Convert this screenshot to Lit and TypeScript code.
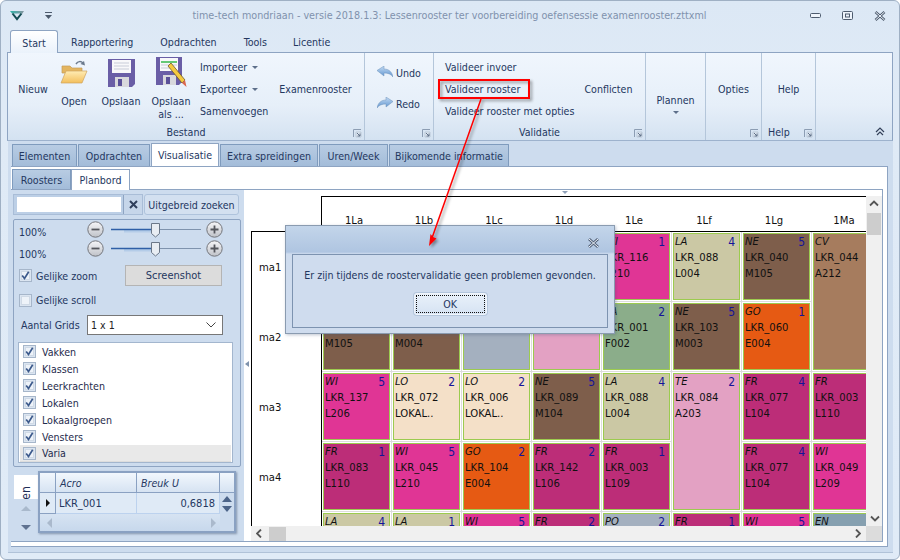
import { LitElement, html, css, svg } from "lit";
import { customElement } from "lit/decorators.js";

type Cell = { s?: string; n?: string; l?: string; r?: string; c: string; tall?: boolean };

const rows: { label: string; cells: Cell[] }[] = [
  { label: "ma1", cells: [
    { c: "brown" }, { c: "brown" }, { c: "grey" }, { c: "lpink" },
    { s: "WI", n: "1", l: "LKR_116", r: "L210", c: "mag" },
    { s: "LA", n: "4", l: "LKR_088", r: "L004", c: "khaki" },
    { s: "NE", n: "5", l: "LKR_040", r: "M105", c: "brown" },
    { s: "CV", l: "LKR_044", r: "A212", c: "tan", tall: true },
  ]},
  { label: "ma2", cells: [
    { r: "M105", c: "brown" }, { r: "M004", c: "brown" }, { c: "grey" }, { c: "lpink" },
    { s: "LA", n: "2", l: "LKR_001", r: "F002", c: "green" },
    { s: "NE", n: "5", l: "LKR_103", r: "M003", c: "brown" },
    { s: "GO", n: "1", l: "LKR_060", r: "E004", c: "orange" },
  ]},
  { label: "ma3", cells: [
    { s: "WI", n: "5", l: "LKR_137", r: "L206", c: "mag" },
    { s: "LO", n: "2", l: "LKR_072", r: "LOKAL..", c: "beige" },
    { s: "LO", n: "2", l: "LKR_006", r: "LOKAL..", c: "beige" },
    { s: "NE", n: "5", l: "LKR_089", r: "M104", c: "brown" },
    { s: "LA", n: "4", l: "LKR_088", r: "L004", c: "khaki" },
    { s: "TE", n: "2", l: "LKR_084", r: "A203", c: "lpink", tall: true },
    { s: "FR", n: "4", l: "LKR_077", r: "L104", c: "plum" },
    { s: "FR", l: "LKR_003", r: "L110", c: "plum" },
  ]},
  { label: "ma4", cells: [
    { s: "FR", n: "1", l: "LKR_083", r: "L110", c: "plum" },
    { s: "WI", n: "5", l: "LKR_045", r: "L210", c: "mag" },
    { s: "GO", n: "2", l: "LKR_104", r: "E004", c: "orange" },
    { s: "FR", n: "2", l: "LKR_142", r: "L106", c: "plum" },
    { s: "FR", n: "1", l: "LKR_003", r: "L109", c: "plum" },
    { s: "FR", n: "4", l: "LKR_077", r: "L104", c: "plum" },
    { s: "WI", l: "LKR_049", r: "L209", c: "mag" },
  ]},
  { label: "", cells: [
    { s: "LA", n: "4", c: "khaki" }, { s: "LA", n: "1", c: "khaki" },
    { s: "WI", n: "5", c: "mag" }, { s: "FR", n: "2", c: "plum" },
    { s: "PO", n: "2", c: "grey" }, { s: "FR", n: "1", c: "plum" },
    { s: "WI", n: "5", c: "mag" }, { s: "EN", c: "steel" },
  ]},
];
const cols = ["1La", "1Lb", "1Lc", "1Ld", "1Le", "1Lf", "1Lg", "1Ma"];
const checks = ["Vakken", "Klassen", "Leerkrachten", "Lokalen", "Lokaalgroepen", "Vensters", "Varia"];

const launcher = html`<svg class="launch" width="9" height="9" viewBox="0 0 9 9"><path d="M.5 8V.5H8" fill="none" stroke="#8c9db3"/><path d="M3 3h5v5H3z" fill="#dfe8f2" stroke="#a9b7c8" stroke-width=".6"/><path d="M4 4l3 3M7 4.500V7H4.500" fill="none" stroke="#5f7088"/></svg>`;
const check = (on: boolean) => html`<svg class="chk" width="13" height="13" viewBox="0 0 13 13"><rect x=".5" y=".5" width="12" height="12" fill="#dbe5f1" stroke="#a6b6ca"/><rect x="2.500" y="2.500" width="8" height="8" fill="#eef3f9" stroke="#d0dae6"/>${on ? svg`<path d="M3.200 6.400l2.300 3 4.200-6.600" fill="none" stroke="#3c5a8c" stroke-width="1.700"/>` : ""}</svg>`;
const roundBtn = (plus: boolean) => html`<svg width="17" height="17" viewBox="0 0 17 17"><circle cx="8.500" cy="8.500" r="7.700" fill="url(#rb)" stroke="#74767c"/><path d="${plus ? "M4.500 8.500h8M8.500 4.500v8" : "M4.500 8.500h8"}" stroke="#54565c" stroke-width="1.800"/></svg>`;
const slider = html`<div class="sl">${roundBtn(false)}<svg width="102" height="17" viewBox="0 0 102 17"><path d="M7 8.500h90" stroke="#7f93ad"/><path d="M20 10h31" stroke="#b4cce8" stroke-width="3"/><path d="M7 8.500h44" stroke="#2f5fa6" stroke-width="1.400"/><path d="M47.500 2.500h8v10l-4 3.500-4-3.500z" fill="#e8edf3" stroke="#6a7788"/></svg>${roundBtn(true)}</div>`;

@customElement("app-root")
export class AppRoot extends LitElement {
  static styles = css`
    :host { display:block; position:relative; width:900px; height:560px; overflow:hidden; background:#fff;
      font-family:"DejaVu Sans Condensed","DejaVu Sans",sans-serif; font-stretch:condensed; font-size:10.600px; color:#24375f; }
    .win { box-sizing:border-box; width:900px; height:560px; display:flex; flex-direction:column;
      border:1px solid #9fb0c4; border-radius:6px; background:linear-gradient(#dce8f5 0,#dfeaf6 100px,#e0ebf7); }
    .title { height:29px; flex:none; display:flex; align-items:center; position:relative; padding-left:9px; }
    .logo { flex:none; }
    .qat { flex:none; margin-left:21px; }
    .ttl { flex:1; text-align:center; color:#8092ad; font-size:10.700px; padding-left:37px; white-space:nowrap; }
    .ctl { flex:none; display:flex; align-items:center; gap:20px; margin-right:13px; }
    .rtabs { height:22px; flex:none; display:flex; padding-left:9px; position:relative; z-index:2; }
    .rtab { display:flex; align-items:center; height:22px; box-sizing:border-box; padding-top:1px; }
    .rtab.on { width:48px; justify-content:center; border:1px solid #8ea4c2; border-bottom:none; border-radius:3px 3px 0 0;
      background:linear-gradient(#fff,#eaf2fb); height:23px; }
    .t1 { margin-left:13px; } .t2 { margin-left:27px; } .t3 { margin-left:27px; } .t4 { margin-left:26px; }
    .ribbon { height:89px; flex:none; margin:0 6px; display:flex; box-sizing:border-box; border:1px solid #8ea4c2; border-bottom:1px solid #9db2cd;
      background:linear-gradient(#f0f6fd,#e6eff9 60%,#d4e2f1); position:relative; }
    .grp { position:relative; flex:none; box-sizing:border-box; border-right:1px solid #b4c6da; height:87px; }
    .g1 { width:357px; } .g2 { width:69px; } .g3 { width:212px; } .g4 { width:60px; } .g5 { width:56px; } .g6 { width:54px; }
    .launch { position:absolute; right:2px; bottom:2px; }
    .glab { position:absolute; bottom:1px; left:0; right:0; text-align:center; line-height:14px; }
    .g6 .glab { text-align:left; padding-left:6px; }
    .gb { display:grid; height:66px; padding-top:3px; box-sizing:content-box; align-items:center; }
    .g1 .gb { grid-template-columns:30px 28px 42px 34px 67px 73px; column-gap:12px; padding-left:10px; }
    .g3 .gb { grid-template-columns:auto 1fr; padding-left:10px; column-gap:10px; }
    .big { display:flex; flex-direction:column; align-items:center; align-self:start; padding-top:2px; text-align:center; line-height:13px; white-space:nowrap; }
    .ib { height:36px; padding-top:1px; display:flex; align-items:flex-start; justify-content:center; }
    .ib.hi { margin-top:-2px; height:38px; }
    .stack { display:grid; grid-template-rows:repeat(3,22px); align-items:center; white-space:nowrap; margin-top:-1px; }
    .g3 .stack { padding-left:1px; }
    .stack .dd::after { content:""; display:inline-block; margin-left:5px; vertical-align:2px; border:3px solid transparent; border-top:3px solid #5d6f8a; border-bottom:none; }
    .ur { display:grid; grid-template-rows:31px 31px; align-items:center; padding:4px 0 0 12px; }
    .ur div { display:flex; align-items:center; gap:3px; }
    .ctr { display:flex; align-items:center; justify-content:center; height:66px; padding-top:3px; white-space:nowrap; }
    .gb .ctr { padding-top:0; margin-top:-1px; }
    .g3 .ctr { justify-content:flex-start; }
    .ctr.pl { flex-direction:column; justify-content:flex-start; padding-top:41px; height:26px; gap:5px; }
    .pl i { display:block; border:3.500px solid transparent; border-top:3.500px solid #5d6f8a; border-bottom:none; }
    .chev { position:absolute; right:7px; bottom:4px; }

    .doc { flex:1; margin:0 6px 6px 7px; box-sizing:border-box; background:#cddcee; padding:3px 5px 5px 3px; display:flex; flex-direction:column; min-height:0;
      border-bottom:1px solid #b0c2d8; }
    .dtabs { display:flex; height:22px; flex:none; padding-left:1px; gap:1px; }
    .dtab { box-sizing:border-box; display:flex; align-items:center; justify-content:center; height:22px; border:1px solid #7f9bbd; border-bottom:none;
      background:linear-gradient(#b8cce3,#a3bcd9); border-radius:1px 1px 0 0; }
    .dtab.on { background:#fff; height:23px; margin-top:-1px; border-color:#8ea4c2; position:relative; z-index:1; }
    .w1 { width:65px; } .w2 { width:72px; } .w3 { width:68px; } .w4 { width:98px; } .w5 { width:69px; } .w6 { width:120px; }
    .page { flex:1; min-height:0; background:#fff; border-right:1px solid #8ea4c2; border-top:1px solid #8ea4c2; padding:2px 4px 4px 0; display:flex; flex-direction:column; border-bottom:1px solid #8ea4c2; }
    .stabs { display:flex; height:20px; flex:none; padding-left:1px; position:relative; }
    .stab { box-sizing:border-box; width:59px; display:flex; align-items:center; justify-content:center; height:20px; }
    .stab.off { background:linear-gradient(#b8cce3,#a3bcd9); border:1px solid #7f9bbd; border-bottom:none; }
    .stab.on { height:21px; border:1px solid #8ea4c2; border-bottom:none; background:#fff; position:relative; z-index:1; }
    .sub { flex:1; min-height:0; display:flex; border:1px solid #8ea4c2; border-left:none; }
    .left { width:233px; flex:none; box-sizing:border-box; background:#cddcee; padding:4px 4px 0 2px; display:flex; flex-direction:column; }
    .split { width:7px; flex:none; background:#fff; display:flex; align-items:center; padding-left:1px; box-sizing:border-box; }
    .split i { border:3px solid transparent; border-right:4px solid #7f93ad; border-left:none; margin-top:-4px; }
    .srch { display:flex; height:21px; flex:none; }
    .sbox { box-sizing:border-box; width:130px; display:flex; align-items:stretch; border:1px solid #a9bdd7; background:#bccfe6; padding:0; }
    .sinp { flex:1; background:#fff; margin:2px 2px 2px 3px; }
    .sx { width:18px; border-left:1px solid #8ea4c2; background:#c6d6ea; display:flex; align-items:center; justify-content:center; }
    .btn { box-sizing:border-box; width:95px; margin-left:1px; display:flex; align-items:center; justify-content:center; border:1px solid #afc3dc; border-radius:3px; background:#d3e0f0; white-space:nowrap; }
    .gbx { flex:none; margin-top:4px; width:228px; height:248px; box-sizing:border-box; border:1px solid #8ea4c2; border-radius:2px; padding:0 3px 0 4px; }
    .zoom { display:grid; grid-template-columns:72px 1fr; height:38px; }
    .zl { display:flex; flex-direction:column; gap:8px; padding:5px 0 0 1px; line-height:14px; }
    .sl { display:flex; align-items:center; height:19px; gap:0; margin-left:-3px; }
    .sl svg { flex:none; }
    .row2 { display:grid; grid-template-columns:106px 97px; height:21px; margin-top:7px; align-items:center; padding-left:1px; }
    .cb { display:flex; align-items:center; gap:4px; }
    .shot { height:21px; box-sizing:border-box; background:#dcdcdc; border:1px solid #b4b4b4; display:flex; align-items:center; justify-content:center; font-size:11px; }
    .row3 { height:14px; margin-top:7px; padding-left:1px; }
    .row4 { display:flex; height:20px; margin-top:8px; align-items:center; padding-left:3px; }
    .row4 span { width:66px; flex:none; }
    .sel { width:136px; height:20px; box-sizing:border-box; background:#fff; border:1px solid #777; display:flex; align-items:center; justify-content:space-between; padding:0 6px 0 3px; color:#222; font-size:10.600px; }
    .list { height:121px; width:215px; margin-top:7px; box-sizing:border-box; background:#fff; border:1px solid #a3b6ce; padding-top:0; }
    .li { display:flex; align-items:center; height:17px; box-sizing:border-box; padding-left:4px; gap:6px; color:#1f2b4d; }
    .li.sel2 { background:#e9e9e9; margin:0 1px; padding-left:3px; border-bottom:1px solid #ddd; }
    .bot { display:flex; height:63px; margin-top:4px; flex:none; padding-left:1px; }
    .vt { width:24px; flex:none; display:flex; flex-direction:column; align-items:center; padding-top:4px; box-sizing:border-box; }
    .vtab { width:24px; height:24px; background:#fff; display:flex; align-items:center; justify-content:center; overflow:hidden; }
    .vtab span { transform:translateY(6px) rotate(-90deg); color:#1e2d55; font-size:12px; }
    .vt .up { margin-top:7px; border:5px solid transparent; border-bottom:5px solid #a9b9cc; border-top:none; }
    .vt .dn { margin-top:14px; border:5px solid transparent; border-top:5px solid #5f7290; border-bottom:none; }
    .dg { width:198px; box-sizing:border-box; height:62px; border:2px solid #8aa1c2; background:#cddcee; box-shadow:1px 1px 2px rgba(60,80,110,.5); display:grid;
      grid-template-columns:16px 81px 83px 1fr; grid-template-rows:20px 21px 1fr; }
    .dh { background:linear-gradient(#f2f7fd,#d6e3f2); border-right:1px solid #8aa1c2; border-bottom:1px solid #8aa1c2; display:flex; align-items:center; padding-left:4px; font-style:italic; }
    .dh.e { padding:0; border-right:none; }
    .dc { background:#dfeaf6; border-right:1px solid #bcd2ee; border-bottom:1px solid #bcd2ee; display:flex; align-items:center; padding:0 2px 0 3px; color:#24375f; font-size:11px; }
    .dc.ind { border-right:1px solid #8aa1c2; border-bottom:1px solid #8aa1c2; padding:0 0 0 6px; background:#dfeaf6; }
    .dc.ind i { border:4px solid transparent; border-left:4px solid #111; border-right:none; }
    .dc.num { justify-content:flex-end; padding-right:4px; }
    .vs { display:flex; flex-direction:column; align-items:center; justify-content:center; gap:4px; background:#cddcee; }
    .vs .u { border:5px solid transparent; border-bottom:6px solid #4b6388; border-top:none; }
    .vs .d { border:5px solid transparent; border-top:6px solid #4b6388; border-bottom:none; }
    .hs { grid-column:1 / 4; display:flex; align-items:center; justify-content:space-between; padding:0 4px 0 7px; background:linear-gradient(#d6e3f2,#c7d8ec); }
    .hs .l { border:5px solid transparent; border-right:5px solid #aab9cc; border-left:none; }
    .hs .r { border:5px solid transparent; border-left:5px solid #aab9cc; border-right:none; }

    .canvas { flex:1; min-width:0; background:#fff; display:grid; grid-template-columns:1fr 16px; grid-template-rows:1fr 15px; padding-top:6px; position:relative; }
    .tri { position:absolute; left:311px; top:1px; border:3px solid transparent; border-top:3px solid #8ea0b8; border-bottom:none; }
    .view { overflow:hidden; min-width:0; min-height:0; }
    .sheet { display:grid; grid-template-columns:71px repeat(8,70px); grid-template-rows:36px repeat(5,70px); width:631px;
      font-size:11.200px; color:#111; }
    .corner { border-bottom:1px solid #000; border-right:1px solid #000; }
    .ch { border-top:1px solid #000; border-bottom:1px solid #000; display:flex; align-items:flex-end; justify-content:center; padding:0 6px 3px 0; box-sizing:border-box; line-height:14px; }
    .rh { border-left:1px solid #000; border-right:1px solid #000; display:flex; align-items:center; padding-left:7px; }
    .slot { box-sizing:border-box; padding:1px; border-right:1px solid #ddd; border-bottom:1px solid #ddd; display:flex; min-width:0; }
    .slot.tall { grid-row:span 2; }
    .cell { flex:1; box-sizing:border-box; border:1px solid #9ccb4f; padding:0 4px 0 1px; line-height:16px; color:#111; overflow:hidden; min-width:0; }
    .l1 { display:flex; justify-content:space-between; height:16px; }
    .l1 em { font-style:italic; }
    .l1 b { font-weight:normal; color:#13139a; font-size:12px; }
    .ln { height:16px; white-space:nowrap; }
    .mag { background:#e03595; } .plum { background:#bc2d78; } .brown { background:#7e5e4b; } .khaki { background:#cbc8a4; }
    .orange { background:#e65a13; } .green { background:#8bad8a; } .beige { background:#f4e0c8; } .lpink { background:#e3a1c3; }
    .grey { background:#a4b0bf; } .tan { background:#a67c5e; } .steel { background:#86a0b0; }
    .vsb { background:#f0f0f0; display:flex; flex-direction:column; align-items:center; padding:4px 1px 0; box-sizing:border-box; position:relative; }
    .vsb .th { align-self:stretch; height:22px; background:#cdcdcd; margin-top:6px; }
    .vsb .dwn { position:absolute; bottom:4px; left:4px; }
    .hsb { background:#f0f0f0; display:flex; align-items:center; padding-left:5px; position:relative; }
    .hsb .th { width:17px; height:14px; background:#cdcdcd; margin-left:7px; }
    .hsb .rt { position:absolute; right:5px; top:3px; }
    .cr { background:#dcdcdc; }

    .dlg { position:absolute; left:285px; top:225px; width:330px; height:109px; box-sizing:border-box; border:1px solid #8a9bb0; z-index:5;
      background:linear-gradient(#c3d5ea,#afc5e1 26px,#cfdcee 28px); box-shadow:1px 1px 3px rgba(70,90,120,.35); display:flex; flex-direction:column; padding:28px 6px 5px 6px; }
    .dx { position:absolute; right:14px; top:12px; }
    .dbody { flex:1; border:1px solid #7d93b0; background:#cfdcee; display:flex; flex-direction:column; align-items:center; }
    .dmsg { font-size:10.600px; margin-top:12px; line-height:16px; white-space:nowrap; }
    .ok { width:73px; height:22px; margin-top:10px; box-sizing:border-box; border:1px solid #f0f5fb; border-radius:3px; background:linear-gradient(#e9f1fa,#d6e3f3); box-shadow:0 0 0 1px #b4c6dc; padding:1px; }
    .ok div { height:100%; border:1px dotted #111; box-sizing:border-box; display:flex; align-items:center; justify-content:center; }
    .anno { position:absolute; left:0; top:0; z-index:6; pointer-events:none; }
    .defs { position:absolute; }
  `;

  private cellT(c: Cell) {
    return html`<div class="slot ${c.tall ? "tall" : ""}"><div class="cell ${c.c}">
      <div class="l1"><em>${c.s ?? ""}</em><b>${c.n ?? ""}</b></div>
      <div class="ln">${c.l ?? ""}</div><div class="ln">${c.r ?? ""}</div>
    </div></div>`;
  }

  render() {
    return html`
    <svg class="defs" width="0" height="0"><defs>
      <linearGradient id="rb" x1="0" y1="0" x2="0" y2="1"><stop offset="0" stop-color="#f6f6f8"/><stop offset="1" stop-color="#bfc2c8"/></linearGradient>
      <linearGradient id="fo" x1="0" y1="0" x2="0" y2="1"><stop offset="0" stop-color="#ffecb4"/><stop offset="1" stop-color="#f3bf5c"/></linearGradient>
      <linearGradient id="ar" x1="0" y1="0" x2="0" y2="1"><stop offset="0" stop-color="#c4dcf4"/><stop offset="1" stop-color="#5e93cf"/></linearGradient>
      <linearGradient id="lg" x1="0" y1="0" x2="1" y2="0"><stop offset="0" stop-color="#2fb3a8"/><stop offset="1" stop-color="#8a97a2"/></linearGradient>
    </defs></svg>
    <div class="win">
      <div class="title">
        <svg class="logo" width="14" height="10" viewBox="0 0 14 10"><path d="M0 0h14L12.500 2.500H2z" fill="url(#lg)"/><path d="M2.500 2.500L7 8.200l4.500-5.700" fill="none" stroke="#124b52" stroke-width="2"/></svg>
        <svg class="qat" width="7" height="7" viewBox="0 0 7 7"><path d="M0 .5h7" stroke="#4c5a6c"/><path d="M0 3h7L3.500 7z" fill="#4c5a6c"/></svg>
        <div class="ttl">time-tech mondriaan - versie 2018.1.3: Lessenrooster ter voorbereiding oefensessie examenrooster.zttxml</div>
        <div class="ctl">
          <svg width="12" height="6" viewBox="0 0 12 6"><rect x=".5" y=".5" width="10" height="4" rx="1" fill="#eef4fb" stroke="#4d5b6e"/></svg>
          <svg width="12" height="10" viewBox="0 0 12 10"><rect x=".5" y=".5" width="10" height="8" rx="1" fill="#eef4fb" stroke="#4d5b6e"/><rect x="3.500" y="3" width="4" height="3" fill="none" stroke="#4d5b6e"/></svg>
          <svg width="12" height="10" viewBox="0 0 12 10"><path d="M1.500 1l9 8M10.500 1l-9 8" stroke="#4d5b6e" stroke-width="2.600"/><path d="M1.500 1l9 8M10.500 1l-9 8" stroke="#eef4fb" stroke-width="1"/></svg>
        </div>
      </div>
      <div class="rtabs">
        <div class="rtab on">Start</div>
        <div class="rtab t1">Rapportering</div><div class="rtab t2">Opdrachten</div><div class="rtab t3">Tools</div><div class="rtab t4">Licentie</div>
      </div>
      <div class="ribbon">
        <div class="grp g1"><div class="gb">
          <div class="ctr">Nieuw</div>
          <div class="big"><div class="ib"><svg width="28" height="26" viewBox="0 0 28 26">
            <path d="M16 5c2-3 5-3 7-1" fill="none" stroke="#6b7a8c" stroke-width="1.500"/><path d="M25 6.500l-1-4.500-3.500 3z" fill="#6b7a8c"/>
            <path d="M2 7h8l2 2h10v5H2z" fill="#e3b560" stroke="#c49b58" stroke-width=".7"/>
            <path d="M6 12h21l-5 12H1z" fill="url(#fo)" stroke="#cfa45e" stroke-width=".7"/></svg></div>Open</div>
          <div class="big"><div class="ib"><svg width="27" height="28" viewBox="0 0 27 28">
            <path d="M0 0h27v25l-3 3H0z" fill="#6a5ea6"/><rect x="4" y="1" width="19" height="13" fill="#f8f8fa"/>
            <path d="M6 4h15M6 7h15M6 10h15" stroke="#c8ccd8"/><rect x="7" y="18" width="14" height="10" fill="#d8d8dc"/><rect x="10" y="20" width="4" height="7" fill="#5a5098"/></svg></div>Opslaan</div>
          <div class="big"><div class="ib hi"><svg width="31" height="32" viewBox="0 0 31 32">
            <path d="M0 0h26v25l-3 3H0z" fill="#6a5ea6"/><rect x="4" y="1" width="18" height="13" fill="#f8f8fa"/>
            <path d="M5 5h16" stroke="#35b84a" stroke-width="1.500"/><path d="M5 8h16M5 11h10" stroke="#c8ccd8"/><rect x="7" y="18" width="13" height="10" fill="#d8d8dc"/><rect x="10" y="20" width="4" height="7" fill="#5a5098"/>
            <path d="M12 9l3-3 14 17-3 3z" fill="#f5c93f" stroke="#6d5a2a" stroke-width=".8"/><path d="M26 26l3-3 1.500 7z" fill="#d9674f"/></svg></div>Opslaan<br>als ...</div>
          <div class="stack"><div class="dd">Importeer</div><div class="dd">Exporteer</div><div>Samenvoegen</div></div>
          <div class="ctr">Examenrooster</div>
        </div><div class="glab">Bestand</div>${launcher}</div>
        <div class="grp g2"><div class="ur">
          <div><svg width="16" height="13" viewBox="0 0 16 13"><path d="M0 4.500L7 0v3c5 0 8 3 9 8-2-3-5-4-9-4v3z" fill="url(#ar)" stroke="#6f92ba" stroke-width=".5"/></svg>Undo</div>
          <div><svg width="16" height="13" viewBox="0 0 16 13"><path d="M16 4.500L9 0v3C4 3 1 6 0 11c2-3 5-4 9-4v3z" fill="url(#ar)" stroke="#6f92ba" stroke-width=".5"/></svg>Redo</div>
        </div>${launcher}</div>
        <div class="grp g3"><div class="gb">
          <div class="stack"><div>Valideer invoer</div><div>Valideer rooster</div><div>Valideer rooster met opties</div></div>
          <div class="ctr">Conflicten</div>
        </div><div class="glab">Validatie</div>${launcher}</div>
        <div class="grp g4"><div class="ctr pl">Plannen<i></i></div></div>
        <div class="grp g5"><div class="ctr">Opties</div>${launcher}</div>
        <div class="grp g6"><div class="ctr">Help</div><div class="glab">Help</div>${launcher}</div>
        <svg class="chev" width="10" height="9" viewBox="0 0 10 9"><path d="M1 5l4-4 4 4M2 8l3-3 3 3" fill="none" stroke="#33415a" stroke-width="1.200"/></svg>
      </div>
      <div class="doc">
        <div class="dtabs">
          <div class="dtab w1">Elementen</div><div class="dtab w2">Opdrachten</div>
          <div class="dtab on w3">Visualisatie</div><div class="dtab w4">Extra spreidingen</div>
          <div class="dtab w5">Uren/Week</div><div class="dtab w6">Bijkomende informatie</div>
        </div>
        <div class="page">
          <div class="stabs"><div class="stab off">Roosters</div><div class="stab on">Planbord</div></div>
          <div class="sub">
            <div class="left">
              <div class="srch">
                <div class="sbox"><div class="sinp"></div><div class="sx"><svg width="9" height="9" viewBox="0 0 9 9"><path d="M1 1l7 7M8 1L1 8" stroke="#2f3f5c" stroke-width="2"/></svg></div></div>
                <div class="btn">Uitgebreid zoeken</div>
              </div>
              <div class="gbx">
                <div class="zoom"><div class="zl"><div>100%</div><div>100%</div></div><div>${slider}${slider}</div></div>
                <div class="row2"><div class="cb">${check(true)}Gelijke zoom</div><div class="shot">Screenshot</div></div>
                <div class="row3 cb">${check(false)}Gelijke scroll</div>
                <div class="row4"><span>Aantal Grids</span><div class="sel">1 x 1<svg width="10" height="6" viewBox="0 0 10 6"><path d="M.5.500L5 5 9.500.5" fill="none" stroke="#444"/></svg></div></div>
                <div class="list">${checks.map((c) => html`<div class="li ${c === "Varia" ? "sel2" : ""}">${check(true)}${c}</div>`)}</div>
              </div>
              <div class="bot">
                <div class="vt"><div class="vtab"><span>en</span></div><i class="up"></i><i class="dn"></i></div>
                <div class="dg">
                  <div class="dh"></div><div class="dh">Acro</div><div class="dh">Breuk U</div><div class="dh e"></div>
                  <div class="dc ind"><i></i></div><div class="dc">LKR_001</div><div class="dc num">0,6818</div>
                  <div class="vs"><i class="u"></i><i class="d"></i></div>
                  <div class="hs"><i class="l"></i><i class="r"></i></div><div></div>
                </div>
              </div>
            </div>
            <div class="split"><i></i></div>
            <div class="canvas">
              <i class="tri"></i>
              <div class="view"><div class="sheet">
                <div class="corner"></div>
                ${cols.map((c) => html`<div class="ch">${c}</div>`)}
                ${rows.map((r) => html`<div class="rh">${r.label}</div>${r.cells.map((c) => this.cellT(c))}`)}
              </div></div>
              <div class="vsb">
                <svg width="10" height="7" viewBox="0 0 10 7"><path d="M1 5.500l4-4 4 4" fill="none" stroke="#555" stroke-width="1.800"/></svg>
                <div class="th"></div>
                <svg class="dwn" width="10" height="7" viewBox="0 0 10 7"><path d="M1 1.500l4 4 4-4" fill="none" stroke="#555" stroke-width="1.800"/></svg>
              </div>
              <div class="hsb">
                <svg width="6" height="9" viewBox="0 0 6 9"><path d="M5 .5l-4 4 4 4" fill="none" stroke="#555" stroke-width="1.800"/></svg>
                <div class="th"></div>
                <svg class="rt" width="6" height="9" viewBox="0 0 6 9"><path d="M1 .5l4 4-4 4" fill="none" stroke="#555" stroke-width="1.800"/></svg>
              </div>
              <div class="cr"></div>
            </div>
          </div>
        </div>
      </div>
    </div>

    <div class="dlg">
      <svg class="dx" width="13" height="10" viewBox="0 0 13 10"><path d="M2 1l9 8M11 1l-9 8" stroke="#55637a" stroke-width="2.800"/><path d="M2 1l9 8M11 1l-9 8" stroke="#eef4fb" stroke-width="1"/></svg>
      <div class="dbody">
        <div class="dmsg">Er zijn tijdens de roostervalidatie geen problemen gevonden.</div>
        <div class="ok"><div>OK</div></div>
      </div>
    </div>

    <svg class="anno" width="900" height="560" viewBox="0 0 900 560">
      <defs><filter id="sh" x="-20%" y="-20%" width="140%" height="140%"><feDropShadow dx="2" dy="2" stdDeviation="1.500" flood-color="#000" flood-opacity=".4"/></filter></defs>
      <g filter="url(#sh)">
        <rect x="439" y="80" width="90" height="18" fill="none" stroke="#f00" stroke-width="2"/>
        <path d="M481 99L432 238" stroke="#f00" stroke-width="1.500" fill="none"/>
        <path d="M429 246l1.500-12 2.500 3 3.500 1.500z" fill="#f00"/>
      </g>
    </svg>`;
  }
}
